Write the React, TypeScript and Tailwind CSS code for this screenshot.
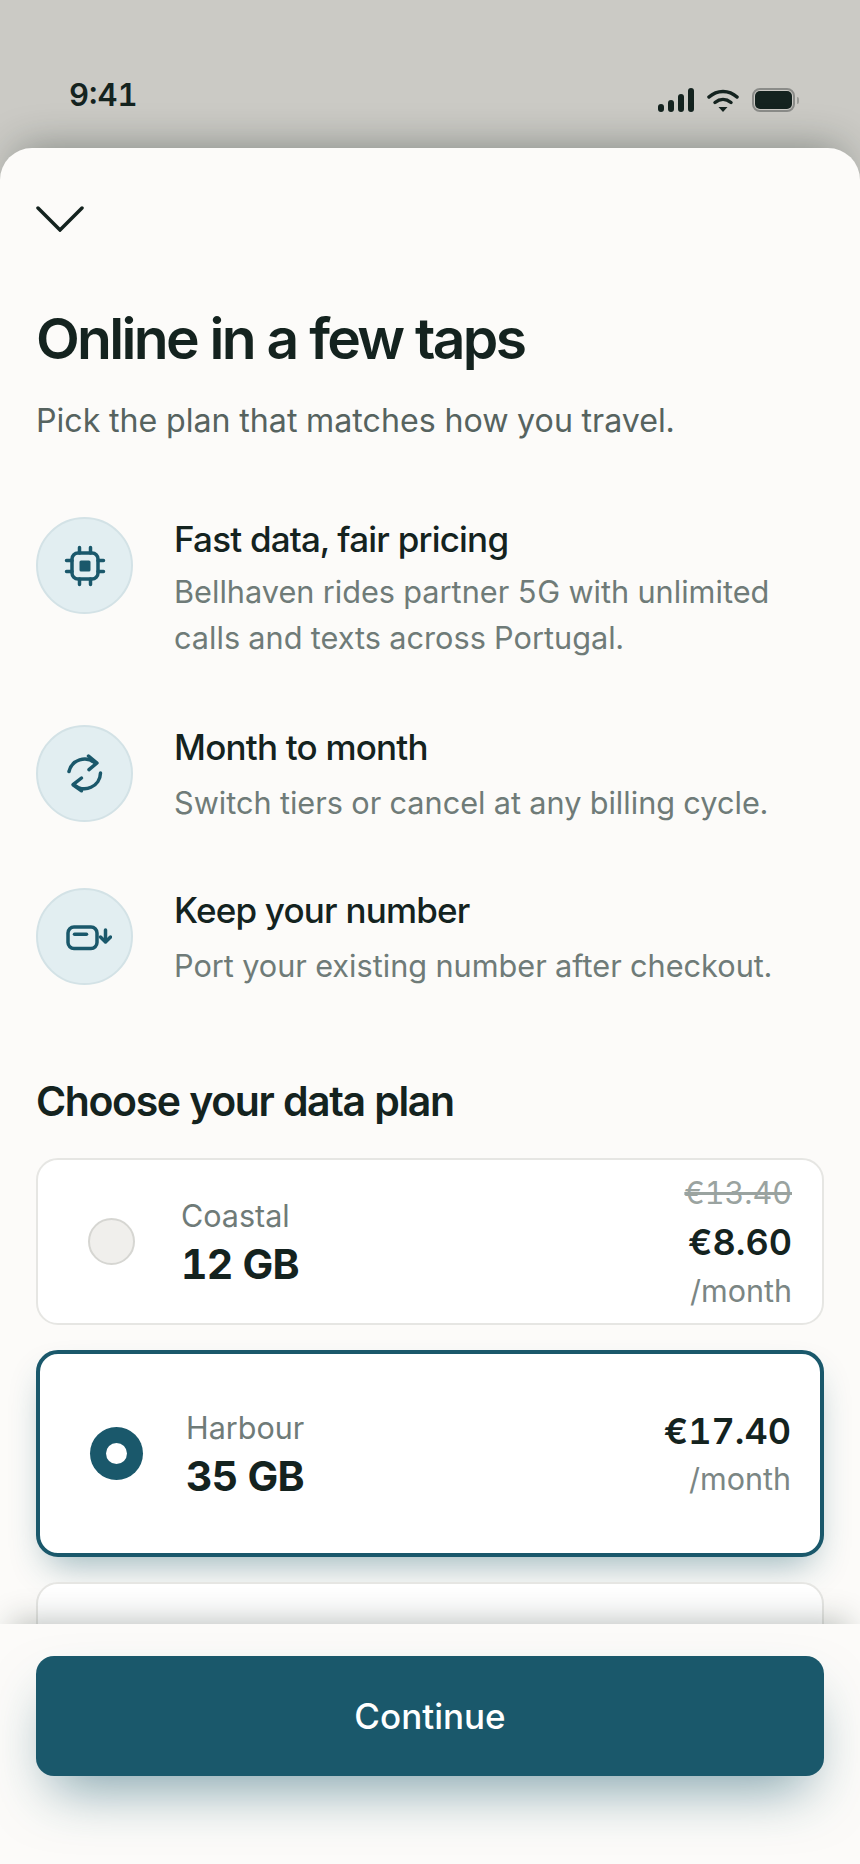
const features = [
  {
    title: "Fast data, fair pricing",
    text: ["Bellhaven rides partner 5G with unlimited", "calls and texts across Portugal."],
    icon: <ChipIcon />,
    rowCls: "h-[141px]",
    textCls: "mt-[8px]",
  },
  {
    title: "Month to month",
    text: ["Switch tiers or cancel at any billing cycle."],
    icon: <CycleIcon />,
    rowCls: "h-[97px]",
    textCls: "mt-[11px]",
  },
  {
    title: "Keep your number",
    text: ["Port your existing number after checkout."],
    icon: <PortIcon />,
    rowCls: "h-[97px]",
    textCls: "mt-[11px]",
  },
];

function ChipIcon() {
  return (
    <svg width="42" height="42" viewBox="0 0 42 42" fill="none" stroke="#1a586b" strokeWidth="3.5" strokeLinecap="round">
      <rect x="8" y="8" width="26" height="26" rx="6" />
      <rect x="15.500" y="15.500" width="11" height="11" rx="1.500" fill="#1a586b" stroke="none" />
      <path d="M15.500 2.500V8M26.500 2.500V8M15.500 34v5.500M26.500 34v5.500M2.500 15.500H8M2.500 26.500H8M34 15.500h5.500M34 26.500h5.500" />
    </svg>
  );
}

function CycleIcon() {
  return (
    <svg width="44" height="44" viewBox="0 0 44 44" fill="none" stroke="#1a586b" strokeWidth="3.500" strokeLinecap="round" strokeLinejoin="round">
      <path d="M6 20.500A16 16 0 0 1 32 12" />
      <path d="M25.500 5L34 12l-8 6.700" />
      <path d="M37.500 22A16 16 0 0 1 11 33.700" />
      <path d="M18.500 27L10 33.700l8.500 6" />
    </svg>
  );
}

function PortIcon() {
  return (
    <svg width="54" height="30" viewBox="-7.500 0 54 30" fill="none" stroke="#1a586b" strokeWidth="3.500" strokeLinecap="round" strokeLinejoin="round">
      <rect x="2.500" y="5" width="29" height="21.500" rx="6" />
      <path d="M9 12.300h12" />
      <path d="M40 8v11" />
      <path d="M35 15l5 5 5-5" />
    </svg>
  );
}

function ChevronIcon() {
  return (
    <svg width="48" height="26" viewBox="0 0 48 26" fill="none" stroke="#14231f" strokeWidth="3.500" strokeLinecap="round">
      <path d="M2 2l22 22L46 2" />
    </svg>
  );
}

function StatusIcons() {
  return (
    <div className="flex items-center gap-[13px]">
      <div className="flex items-end gap-[4px]">
        <div className="h-[8px] w-[6px] rounded-full bg-[#14231f]" />
        <div className="h-[12px] w-[6px] rounded-full bg-[#14231f]" />
        <div className="h-[18px] w-[6px] rounded-full bg-[#14231f]" />
        <div className="h-[24px] w-[6px] rounded-full bg-[#14231f]" />
      </div>
      <svg width="32" height="23" viewBox="0 0 32 23" fill="none" stroke="#14231f" strokeWidth="3.500" strokeLinecap="round">
        <path d="M2 8c8-7.500 20-7.500 28 0" />
        <path d="M8 13.500c5-4 11-4 16 0" />
        <path d="M11.500 18h9L16 23z" fill="#14231f" stroke="none" />
      </svg>
      <div className="flex items-center gap-[2px]">
        <div className="h-[24px] w-[43px] rounded-[8px] border-[2.5px] border-[#8b8c89] p-[1px]">
          <div className="h-full w-full rounded-[5px] bg-[#14231f]" />
        </div>
        <div className="h-[7px] w-[2px] rounded-r-full bg-[#9a9b97]" />
      </div>
    </div>
  );
}

export default function App() {
  return (
    <div className="flex h-[1864px] w-[860px] flex-col overflow-hidden bg-[#cbcac5] font-['Inter',sans-serif] text-[#14231f] tabular-nums">
      {/* Status bar */}
      <div className="flex h-[148px] shrink-0 items-start justify-between pl-[69px] pr-[61px] pt-[76px]">
        <span className="text-[31px] font-semibold leading-[38px]">9:41</span>
        <div className="pt-[12px]">
          <StatusIcons />
        </div>
      </div>

      {/* Sheet */}
      <div className="flex min-h-0 flex-1 flex-col rounded-t-[32px] bg-[#fcfbf9] shadow-[0_-16px_40px_-16px_rgba(20,35,31,0.4)]">
        <div className="min-h-0 flex-1 overflow-hidden px-[36px]">
          <div className="mt-[58px] h-[26px]">
            <ChevronIcon />
          </div>

          <h1 className="mt-[75px] text-[57px] font-semibold leading-[64px] tracking-[-2.7px]">Online in a few taps</h1>
          <p className="mt-[28px] text-[32.2px] leading-[44px] text-[#56635f]">Pick the plan that matches how you travel.</p>

          <div className="mt-[74px] flex flex-col gap-[66.5px]">
            {features.map((f) => (
              <div key={f.title} className={`flex gap-[41px] ${f.rowCls}`}>
                <div className="flex h-[97px] w-[97px] shrink-0 items-center justify-center rounded-full border-2 border-[#d3e2e6] bg-[#e2eef1]">
                  {f.icon}
                </div>
                <div>
                  <p className="text-[35px] font-medium leading-[44px] tracking-[-0.8px]">{f.title}</p>
                  <div className={`text-[30.7px] leading-[46px] text-[#6f7b78] ${f.textCls}`}>
                    {f.text.map((line) => (
                      <p key={line}>{line}</p>
                    ))}
                  </div>
                </div>
              </div>
            ))}
          </div>

          <h2 className="mt-[90px] text-[41px] font-semibold leading-[52px] tracking-[-1.4px]">Choose your data plan</h2>

          <div className="mt-[31px] flex flex-col gap-[25px]">
            <div className="flex h-[167px] items-center justify-between rounded-[22px] border-2 border-[#e6e6e3] bg-white pl-[50px] pr-[30px]">
              <div className="flex items-center gap-[46px]">
                <div className="h-[47px] w-[47px] rounded-full border-2 border-[#d6d6d2] bg-[#f0efec]" />
                <div>
                  <p className="text-[30.5px] leading-[44px] text-[#6f7b78]">Coastal</p>
                  <p className="text-[41px] font-bold leading-[52px] tracking-[-0.8px]">12 GB</p>
                </div>
              </div>
              <div className="text-right">
                <p className="text-[30.5px] leading-[48px] text-[#9aa3a0] line-through">€13.40</p>
                <p className="text-[36px] font-semibold leading-[50px]">€8.60</p>
                <p className="text-[30.5px] leading-[48px] text-[#7b8684]">/month</p>
              </div>
            </div>

            <div className="flex h-[207px] items-center justify-between rounded-[22px] border-[4px] border-[#1a586b] bg-white pl-[50px] pr-[29px] shadow-[0_18px_36px_-12px_rgba(26,88,107,0.45)]">
              <div className="flex items-center gap-[43px]">
                <div className="flex h-[53px] w-[53px] items-center justify-center rounded-full bg-[#1a586b]">
                  <div className="h-[21px] w-[21px] rounded-full bg-white" />
                </div>
                <div>
                  <p className="text-[30.5px] leading-[44px] text-[#6f7b78]">Harbour</p>
                  <p className="text-[41px] font-bold leading-[52px] tracking-[-0.8px]">35 GB</p>
                </div>
              </div>
              <div className="text-right">
                <p className="text-[36px] font-semibold leading-[50px]">€17.40</p>
                <p className="text-[30.5px] leading-[46px] text-[#7b8684]">/month</p>
              </div>
            </div>

            <div className="h-[167px] rounded-[22px] border-2 border-[#e6e6e3] bg-white" />
          </div>
        </div>

        {/* Footer */}
        <div className="relative h-[240px] shrink-0 bg-[#fcfbf9] px-[36px] pt-[32px] shadow-[0_-14px_30px_-12px_rgba(20,35,31,0.3)]">
          <button className="h-[120px] w-full rounded-[18px] bg-[#1a586b] text-[35px] font-medium text-white shadow-[0_28px_56px_-16px_rgba(26,88,107,0.55)]">
            Continue
          </button>
        </div>
      </div>
    </div>
  );
}
